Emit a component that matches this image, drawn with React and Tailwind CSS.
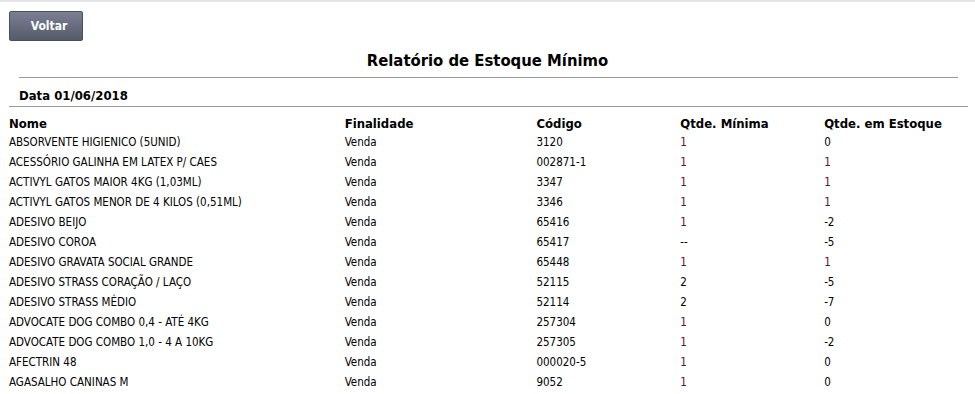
const rows = [
  ['ABSORVENTE HIGIENICO (5UNID)', 'Venda', '3120', '1', '0'],
  ['ACESSÓRIO GALINHA EM LATEX P/ CAES', 'Venda', '002871-1', '1', '1'],
  ['ACTIVYL GATOS MAIOR 4KG (1,03ML)', 'Venda', '3347', '1', '1'],
  ['ACTIVYL GATOS MENOR DE 4 KILOS (0,51ML)', 'Venda', '3346', '1', '1'],
  ['ADESIVO BEIJO', 'Venda', '65416', '1', '-2'],
  ['ADESIVO COROA', 'Venda', '65417', '--', '-5'],
  ['ADESIVO GRAVATA SOCIAL GRANDE', 'Venda', '65448', '1', '1'],
  ['ADESIVO STRASS CORAÇÃO / LAÇO', 'Venda', '52115', '2', '-5'],
  ['ADESIVO STRASS MÉDIO', 'Venda', '52114', '2', '-7'],
  ['ADVOCATE DOG COMBO 0,4 - ATÉ 4KG', 'Venda', '257304', '1', '0'],
  ['ADVOCATE DOG COMBO 1,0 - 4 A 10KG', 'Venda', '257305', '1', '-2'],
  ['AFECTRIN 48', 'Venda', '000020-5', '1', '0'],
  ['AGASALHO CANINAS M', 'Venda', '9052', '1', '0'],
];

const font = { fontFamily: '"DejaVu Sans Condensed", "DejaVu Sans", sans-serif' };

function Qty({ value }) {
  return <span className={value === '1' ? 'text-[#5a1030]' : 'text-black'}>{value}</span>;
}

export default function App() {
  return (
    <div className="w-[975px] h-[394px] bg-white overflow-hidden border-t-2 border-[#e4e4e4] text-black" style={font}>
      <div className="pl-[9px] pt-[9px]">
        <button className="w-[74px] h-[30px] pl-[6px] rounded-[2px] border border-[#4a4f5c] bg-gradient-to-b from-[#7a8092] to-[#555b6b] text-white text-[12px] font-bold">
          Voltar
        </button>
      </div>

      <h1 className="text-center text-[16.5px] font-bold mt-[9px] leading-[22px]">Relatório de Estoque Mínimo</h1>
      <div className="ml-[19px] mr-[17px] mt-[5px] border-t border-[#9a9a9a]"></div>

      <div className="ml-[19px] mt-[10px] text-[13px] font-bold leading-[16px]">Data 01/06/2018</div>
      <div className="ml-[9px] mr-[7px] mt-[2px] border-t border-[#9a9a9a]"></div>

      <div className="mx-[9px] mr-[7px]">
        <div className="grid grid-cols-[35%_20%_15%_15%_15%] text-[13px] font-bold h-[26px] items-end leading-[16px] pb-[1px]">
          <div>Nome</div>
          <div>Finalidade</div>
          <div>Código</div>
          <div>Qtde. Mínima</div>
          <div>Qtde. em Estoque</div>
        </div>
        {rows.map((r, i) => (
          <div key={i} className="grid grid-cols-[35%_20%_15%_15%_15%] text-[11.5px] h-[20px] items-center">
            <div>{r[0]}</div>
            <div>{r[1]}</div>
            <div>{r[2]}</div>
            <div><Qty value={r[3]} /></div>
            <div><Qty value={r[4]} /></div>
          </div>
        ))}
      </div>
    </div>
  );
}
